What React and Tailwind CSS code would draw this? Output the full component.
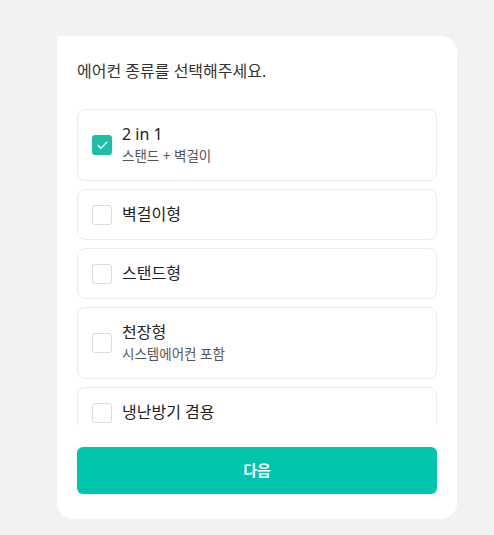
import { Check } from "lucide-react";

const options = [
  { id: "2in1", label: "2 in 1", sub: "스탠드 + 벽걸이", checked: true },
  { id: "wall", label: "벽걸이형" },
  { id: "stand", label: "스탠드형" },
  { id: "ceiling", label: "천장형", sub: "시스템에어컨 포함" },
  { id: "heat", label: "냉난방기 겸용" },
];

function OptionRow({ option }) {
  return (
    <div className="flex items-center gap-[10px] rounded-lg border border-[#ededed] bg-white px-[14px] py-[14px]">
      {option.checked ? (
        <span className="flex h-5 w-5 shrink-0 items-center justify-center rounded-[3px] bg-[#1cc0a6]">
          <Check className="h-[13px] w-[13px] text-white" strokeWidth={2.5} />
        </span>
      ) : (
        <span className="h-5 w-5 shrink-0 rounded-[3px] border border-[#dcdcdc] bg-white" />
      )}
      <div className="flex flex-col">
        <span className="text-[16px] leading-[21px] text-[#222]">{option.label}</span>
        {option.sub && (
          <span className="mt-[1px] text-[13.5px] leading-[20px] text-[#555]">{option.sub}</span>
        )}
      </div>
    </div>
  );
}

export default function App() {
  return (
    <div
      className="min-h-[535px] bg-[#f2f2f2] pl-[57px] pr-[37px] pt-[36px]"
      style={{ fontFamily: '"Noto Sans", "Noto Sans CJK KR", sans-serif' }}
    >
      <div className="w-[400px] rounded-2xl rounded-tl-none bg-white px-5 pb-[25px] pt-[24px]">
        <h2 className="text-[16px] leading-[22px] text-[#333]">에어컨 종류를 선택해주세요.</h2>
        <div className="mt-[27px] flex h-[316px] flex-col gap-2 overflow-hidden">
          {options.map((o) => (
            <OptionRow key={o.id} option={o} />
          ))}
        </div>
        <button className="mt-[22px] flex h-[47px] w-full items-center justify-center rounded-md bg-[#00c4ae] text-[15px] font-bold text-white">
          다음
        </button>
      </div>
    </div>
  );
}
